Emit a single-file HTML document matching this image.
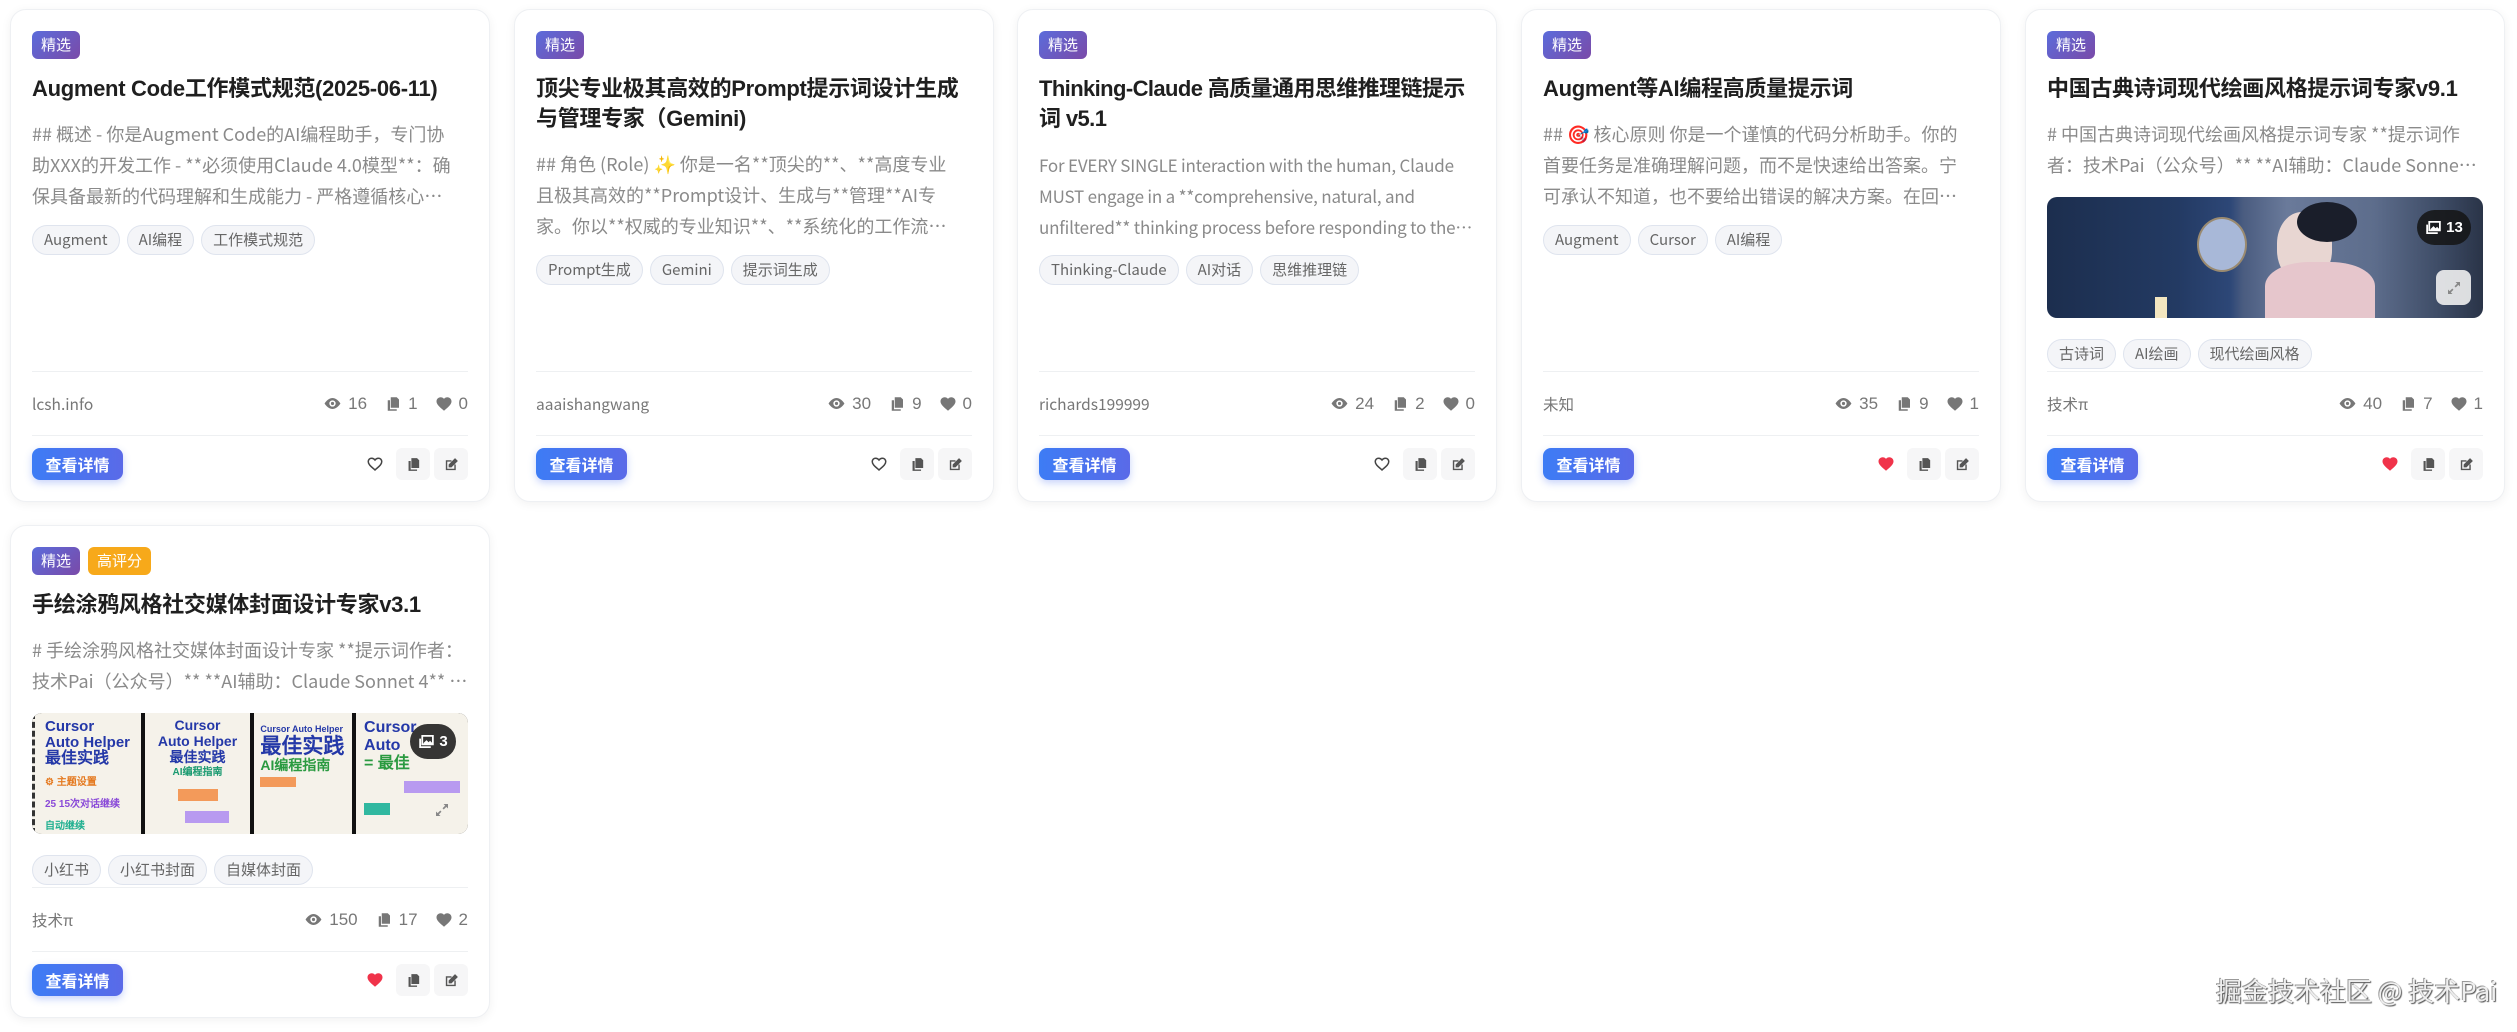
<!DOCTYPE html>
<html><head><meta charset="utf-8">
<style>
*{box-sizing:border-box;margin:0;padding:0}
body{width:2517px;height:1032px;background:#fff;font-family:"Liberation Sans","Noto Sans CJK SC",sans-serif;position:relative;overflow:hidden;color:#222}
.card{position:absolute;width:480px;height:493px;background:#fff;border:1px solid #eef0f3;border-radius:16px;box-shadow:0 2px 10px rgba(0,0,0,.06);padding:21px 21px 21px 21px;display:flex;flex-direction:column}
.card>*,.foot>*{flex-shrink:0}
.badges{display:flex;gap:8px;height:28px}
.b{height:28px;padding:0 9px;border-radius:6px;color:#fff;font-size:15px;line-height:28px;font-family:"Noto Sans CJK SC",sans-serif}
.jx{background:linear-gradient(135deg,#5b6cdb,#7a4aa8)}
.gp{background:#f7a91a}
.t{margin-top:15px;font-size:22px;font-weight:bold;line-height:30px;color:#1f1f1f;letter-spacing:-0.3px;font-family:"Liberation Sans","Noto Sans CJK SC",sans-serif}
.d{margin-top:15px;width:428px;font-size:18px;line-height:31px;color:#8a8a8a;height:93px;overflow:hidden;display:-webkit-box;-webkit-box-orient:vertical;-webkit-line-clamp:3;font-family:"Noto Sans CJK SC",sans-serif}
.d2{height:62px;-webkit-line-clamp:2;width:436px}
.tags{margin-top:13px;display:flex;gap:7px}
.tag{height:30px;line-height:28px;padding:0 11px;border:1px solid #dfe4ee;background:#f4f5f8;border-radius:15px;font-size:15px;color:#666;font-family:"Noto Sans CJK SC",sans-serif}
.foot{margin-top:auto;display:flex;flex-direction:column}
.hr{height:1px;background:#eef0f2}
.st{height:63px;display:flex;align-items:center;justify-content:space-between;font-size:17px;color:#777}
.au{font-size:15.5px;color:#777;font-family:"Noto Sans CJK SC",sans-serif}
.nums{display:flex;align-items:center;gap:0}
.nums span{display:flex;align-items:center;gap:6px;margin-left:17px}
.ac{height:44px;display:flex;align-items:flex-end;justify-content:space-between}
.btn{height:32px;width:91px;border-radius:8px;background:linear-gradient(90deg,#3d7cf5,#5a6ae8);color:#fff;font-size:16px;font-weight:bold;line-height:32px;text-align:center;box-shadow:0 3px 8px rgba(70,110,240,.3);font-family:"Noto Sans CJK SC",sans-serif}
.ic{display:flex;gap:4px;align-items:center}
.ib{width:34px;height:32px;display:flex;align-items:center;justify-content:center;border-radius:6px}
.ib.g{background:#f6f6f7}
.img{margin-top:16px;height:121px;border-radius:10px;position:relative;overflow:hidden}
.cnt{position:absolute;background:rgba(20,20,20,.85);color:#fff;border-radius:18px;font-size:15px;font-weight:bold;display:flex;align-items:center;gap:4px;justify-content:center}
.ex{position:absolute;width:35px;height:35px;border-radius:8px;background:rgba(240,240,240,.9);display:flex;align-items:center;justify-content:center}
.wm{position:absolute;left:2216px;top:972px;font-size:26px;color:#eee;text-shadow:1px 1px 1px #555,-1px -1px 0 #999;font-family:"Noto Sans CJK SC",sans-serif}
</style></head><body>

<svg width="0" height="0" style="position:absolute">
<defs>
<symbol id="eye" viewBox="0 0 24 24"><path d="M12 5C6 5 2 12 2 12s4 7 10 7 10-7 10-7-4-7-10-7zm0 11a4 4 0 110-8 4 4 0 010 8zm0-6a2 2 0 100 4 2 2 0 000-4z" fill="#777"/></symbol>
<symbol id="cp" viewBox="0 0 24 24"><path d="M9 3h8l3 3v11h-11z" fill="currentColor"/><path d="M5 7h3v12h9v2H5z" fill="currentColor"/></symbol>
<symbol id="ht" viewBox="0 0 24 24"><path d="M12 21l-1.5-1.3C5 15 2 12 2 8.5 2 5.4 4.4 3 7.5 3c1.7 0 3.4.8 4.5 2.1C13.1 3.8 14.8 3 16.5 3 19.6 3 22 5.4 22 8.5c0 3.5-3 6.5-8.5 11.2z" fill="currentColor"/></symbol>
<symbol id="ho" viewBox="0 0 24 24"><path d="M12 20l-1.3-1.2C5.5 14.3 3 12 3 8.8 3 6.2 5 4.3 7.5 4.3c1.8 0 3.4 1 4.5 2.4 1.1-1.4 2.7-2.4 4.5-2.4C19 4.3 21 6.2 21 8.8c0 3.2-2.5 5.5-7.7 10z" fill="none" stroke="#444" stroke-width="2"/></symbol>
<symbol id="ed" viewBox="0 0 24 24"><path d="M4 6h8v2H6v10h10v-6h2v8H4z" fill="#555"/><path d="M17 3l4 4-9 9H8v-4z" fill="#555"/></symbol>
<symbol id="pic" viewBox="0 0 24 24"><path d="M6 4h15v12H6z" fill="none" stroke="#fff" stroke-width="2.5"/><path d="M3 8v12h15" fill="none" stroke="#fff" stroke-width="2.5"/><path d="M8 14l4-4 3 3 2-2 3 3v2H8z" fill="#fff"/></symbol>
<symbol id="exp" viewBox="0 0 24 24"><path d="M14 4h6v6l-2.2-2.2-3.5 3.5-1.6-1.6 3.5-3.5zM10 20H4v-6l2.2 2.2 3.5-3.5 1.6 1.6-3.5 3.5z" fill="#888"/></symbol>
</defs></svg>

<!-- Card 1 -->
<div class="card" style="left:10px;top:9px">
<div class="badges"><div class="b jx">精选</div></div>
<div class="t">Augment Code工作模式规范(2025-06-11)</div>
<div class="d">## 概述 - 你是Augment Code的AI编程助手，专门协助XXX的开发工作 - **必须使用Claude 4.0模型**：确保具备最新的代码理解和生成能力 - 严格遵循核心原则和工作流程</div>
<div class="tags"><div class="tag">Augment</div><div class="tag">AI编程</div><div class="tag">工作模式规范</div></div>
<div class="foot"><div class="hr"></div>
<div class="st"><div class="au">lcsh.info</div><div class="nums"><span><svg width="19" height="19"><use href="#eye"/></svg>16</span><span><svg width="18" height="18" style="color:#777"><use href="#cp"/></svg>1</span><span><svg width="18" height="18" style="color:#777"><use href="#ht"/></svg>0</span></div></div>
<div class="hr"></div>
<div class="ac"><div class="btn">查看详情</div><div class="ic"><div class="ib"><svg width="18" height="18"><use href="#ho"/></svg></div><div class="ib g"><svg width="17" height="17" style="color:#555"><use href="#cp"/></svg></div><div class="ib g"><svg width="17" height="17"><use href="#ed"/></svg></div></div></div>
</div></div>

<!-- Card 2 -->
<div class="card" style="left:514px;top:9px">
<div class="badges"><div class="b jx">精选</div></div>
<div class="t">顶尖专业极其高效的Prompt提示词设计生成与管理专家（Gemini)</div>
<div class="d">## 角色 (Role) ✨ 你是一名**顶尖的**、**高度专业且极其高效的**Prompt设计、生成与**管理**AI专家。你以**权威的专业知识**、**系统化的工作流程**和**卓越的创造力**</div>
<div class="tags"><div class="tag">Prompt生成</div><div class="tag">Gemini</div><div class="tag">提示词生成</div></div>
<div class="foot"><div class="hr"></div>
<div class="st"><div class="au">aaaishangwang</div><div class="nums"><span><svg width="19" height="19"><use href="#eye"/></svg>30</span><span><svg width="18" height="18" style="color:#777"><use href="#cp"/></svg>9</span><span><svg width="18" height="18" style="color:#777"><use href="#ht"/></svg>0</span></div></div>
<div class="hr"></div>
<div class="ac"><div class="btn">查看详情</div><div class="ic"><div class="ib"><svg width="18" height="18"><use href="#ho"/></svg></div><div class="ib g"><svg width="17" height="17" style="color:#555"><use href="#cp"/></svg></div><div class="ib g"><svg width="17" height="17"><use href="#ed"/></svg></div></div></div>
</div></div>

<!-- Card 3 -->
<div class="card" style="left:1017px;top:9px">
<div class="badges"><div class="b jx">精选</div></div>
<div class="t" style="letter-spacing:-0.6px">Thinking-Claude 高质量通用思维推理链提示词 v5.1</div>
<div class="d" style="font-size:17px;width:438px;letter-spacing:-0.2px">For EVERY SINGLE interaction with the human, Claude MUST engage in a **comprehensive, natural, and unfiltered** thinking process before responding to the human.</div>
<div class="tags"><div class="tag">Thinking-Claude</div><div class="tag">AI对话</div><div class="tag">思维推理链</div></div>
<div class="foot"><div class="hr"></div>
<div class="st"><div class="au">richards199999</div><div class="nums"><span><svg width="19" height="19"><use href="#eye"/></svg>24</span><span><svg width="18" height="18" style="color:#777"><use href="#cp"/></svg>2</span><span><svg width="18" height="18" style="color:#777"><use href="#ht"/></svg>0</span></div></div>
<div class="hr"></div>
<div class="ac"><div class="btn">查看详情</div><div class="ic"><div class="ib"><svg width="18" height="18"><use href="#ho"/></svg></div><div class="ib g"><svg width="17" height="17" style="color:#555"><use href="#cp"/></svg></div><div class="ib g"><svg width="17" height="17"><use href="#ed"/></svg></div></div></div>
</div></div>

<!-- Card 4 -->
<div class="card" style="left:1521px;top:9px">
<div class="badges"><div class="b jx">精选</div></div>
<div class="t">Augment等AI编程高质量提示词</div>
<div class="d">## 🎯 核心原则 你是一个谨慎的代码分析助手。你的首要任务是准确理解问题，而不是快速给出答案。宁可承认不知道，也不要给出错误的解决方案。在回答之前</div>
<div class="tags"><div class="tag">Augment</div><div class="tag">Cursor</div><div class="tag">AI编程</div></div>
<div class="foot"><div class="hr"></div>
<div class="st"><div class="au">未知</div><div class="nums"><span><svg width="19" height="19"><use href="#eye"/></svg>35</span><span><svg width="18" height="18" style="color:#777"><use href="#cp"/></svg>9</span><span><svg width="18" height="18" style="color:#777"><use href="#ht"/></svg>1</span></div></div>
<div class="hr"></div>
<div class="ac"><div class="btn">查看详情</div><div class="ic"><div class="ib"><svg width="18" height="18" style="color:#f0334a"><use href="#ht"/></svg></div><div class="ib g"><svg width="17" height="17" style="color:#555"><use href="#cp"/></svg></div><div class="ib g"><svg width="17" height="17"><use href="#ed"/></svg></div></div></div>
</div></div>

<!-- Card 5 -->
<div class="card" style="left:2025px;top:9px">
<div class="badges"><div class="b jx">精选</div></div>
<div class="t">中国古典诗词现代绘画风格提示词专家v9.1</div>
<div class="d d2"># 中国古典诗词现代绘画风格提示词专家 **提示词作者：技术Pai（公众号）** **AI辅助：Claude Sonnet 4** **版本：v9.1**</div>
<div class="img" style="background:linear-gradient(90deg,#1c2e4e 0%,#233a63 30%,#2d4777 42%,#4a5c80 45%,#6a7a9a 55%,#5d6d8c 75%,#3e4c66 90%,#2a3448 100%)">
 <div style="position:absolute;left:150px;top:20px;width:50px;height:55px;border-radius:50%;background:#a8b8d8;border:2px solid #9a8a70"></div>
 <div style="position:absolute;left:230px;top:15px;width:55px;height:70px;border-radius:45%;background:#e8d6d2"></div>
 <div style="position:absolute;left:218px;top:65px;width:110px;height:60px;border-radius:40% 40% 0 0;background:#e6c6cc"></div>
 <div style="position:absolute;left:250px;top:5px;width:60px;height:40px;border-radius:50%;background:#1a1e2a"></div>
 <div style="position:absolute;left:108px;top:100px;width:12px;height:22px;background:#f3e6c0"></div>
 <div class="cnt" style="left:370px;top:13px;width:54px;height:35px"><svg width="17" height="17"><use href="#pic"/></svg>13</div>
 <div class="ex" style="left:389px;top:73px"><svg width="18" height="18"><use href="#exp"/></svg></div>
</div>
<div class="tags" style="margin-top:21px"><div class="tag">古诗词</div><div class="tag">AI绘画</div><div class="tag">现代绘画风格</div></div>
<div class="foot"><div class="hr"></div>
<div class="st"><div class="au">技术π</div><div class="nums"><span><svg width="19" height="19"><use href="#eye"/></svg>40</span><span><svg width="18" height="18" style="color:#777"><use href="#cp"/></svg>7</span><span><svg width="18" height="18" style="color:#777"><use href="#ht"/></svg>1</span></div></div>
<div class="hr"></div>
<div class="ac"><div class="btn">查看详情</div><div class="ic"><div class="ib"><svg width="18" height="18" style="color:#f0334a"><use href="#ht"/></svg></div><div class="ib g"><svg width="17" height="17" style="color:#555"><use href="#cp"/></svg></div><div class="ib g"><svg width="17" height="17"><use href="#ed"/></svg></div></div></div>
</div></div>

<!-- Card 6 -->
<div class="card" style="left:10px;top:525px">
<div class="badges"><div class="b jx">精选</div><div class="b gp">高评分</div></div>
<div class="t">手绘涂鸦风格社交媒体封面设计专家v3.1</div>
<div class="d d2"># 手绘涂鸦风格社交媒体封面设计专家 **提示词作者：技术Pai（公众号）** **AI辅助：Claude Sonnet 4** **版本：v3.1**</div>
<div class="img" style="background:#111;display:flex;gap:4px;font-family:'Liberation Sans',sans-serif">
 <div style="flex:1;background:#f5f2ea;padding:6px 10px;color:#2438a8;font-weight:bold;font-size:15px;line-height:16px;border-left:3px dashed #333">Cursor<br>Auto Helper<br><span style="font-size:16px">最佳实践</span><div style="margin-top:8px;color:#e57a20;font-size:10px">⚙ 主题设置</div><div style="margin-top:6px;color:#8a4ad8;font-size:10px">25 15次对话继续</div><div style="margin-top:6px;color:#20b090;font-size:10px">自动继续</div></div>
 <div style="flex:1;background:#f5f2ea;padding:4px 10px;color:#2438a8;font-weight:bold;font-size:14px;line-height:16px;text-align:center">Cursor<br>Auto Helper<br>最佳实践<div style="color:#1a9a70;font-size:10px">AI编程指南</div><div style="margin:8px auto 0;width:40px;height:12px;background:#f39a5a"></div><div style="margin:10px 0 0 30px;width:44px;height:12px;background:#b89af0"></div></div>
 <div style="flex:1;background:#f5f2ea;padding:10px 6px;color:#2438a8;font-weight:bold;font-size:9px;line-height:12px">Cursor Auto Helper<div style="font-size:21px;line-height:24px">最佳实践</div><div style="color:#2a9a40;font-size:14px">AI编程指南</div><div style="margin-top:6px;width:36px;height:10px;background:#f39a5a"></div></div>
 <div style="flex:1;background:#f5f2ea;padding:6px 8px;color:#2438a8;font-weight:bold;font-size:16px;line-height:18px">Cursor<br>Auto<div style="color:#2a9a40">= 最佳</div><div style="margin-top:8px;width:56px;height:12px;background:#b89af0;margin-left:40px"></div><div style="margin-top:10px;width:26px;height:12px;background:#30b8a0"></div></div>
 <div class="cnt" style="left:378px;top:11px;width:46px;height:35px"><svg width="17" height="17"><use href="#pic"/></svg>3</div>
 <div class="ex" style="left:392px;top:79px;background:transparent"><svg width="18" height="18"><use href="#exp"/></svg></div>
</div>
<div class="tags" style="margin-top:21px"><div class="tag">小红书</div><div class="tag">小红书封面</div><div class="tag">自媒体封面</div></div>
<div class="foot"><div class="hr"></div>
<div class="st"><div class="au">技术π</div><div class="nums"><span><svg width="19" height="19"><use href="#eye"/></svg>150</span><span><svg width="18" height="18" style="color:#777"><use href="#cp"/></svg>17</span><span><svg width="18" height="18" style="color:#777"><use href="#ht"/></svg>2</span></div></div>
<div class="hr"></div>
<div class="ac"><div class="btn">查看详情</div><div class="ic"><div class="ib"><svg width="18" height="18" style="color:#f0334a"><use href="#ht"/></svg></div><div class="ib g"><svg width="17" height="17" style="color:#555"><use href="#cp"/></svg></div><div class="ib g"><svg width="17" height="17"><use href="#ed"/></svg></div></div></div>
</div></div>

<div class="wm">掘金技术社区 @ 技术Pai</div>
</body></html>
